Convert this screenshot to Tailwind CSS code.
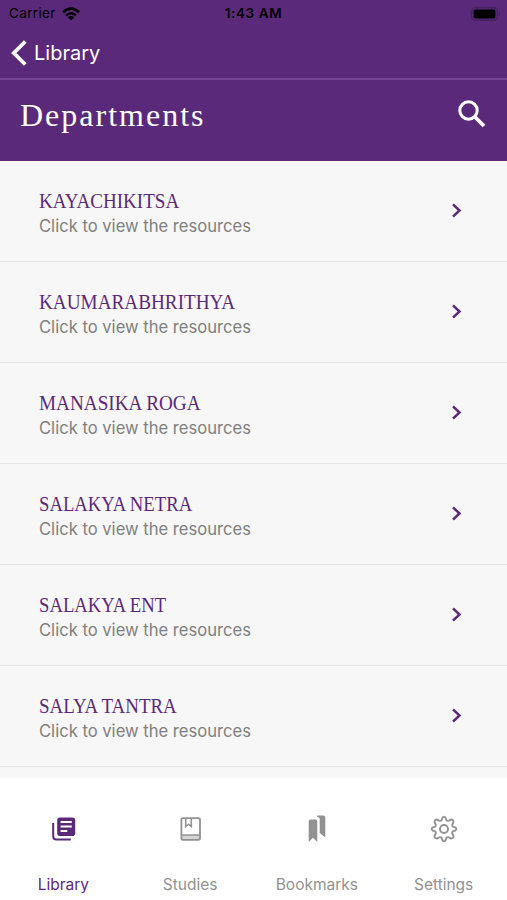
<!DOCTYPE html>
<html lang="en">
<head>
<meta charset="utf-8">
<title>Departments</title>
<script src="https://cdn.jsdelivr.net/npm/@tailwindcss/browser@4"></script>
</head>
<body class="w-[507px] h-[900px] overflow-hidden bg-[#f7f7f7] font-['Inter',sans-serif] flex flex-col">
<header class="h-[161px] shrink-0 bg-[#5b2979] text-white flex flex-col">
  <div class="h-[27px] grid grid-cols-3 items-center text-black text-[13.5px] leading-[27px]">
    <div class="flex items-center pl-[9px] gap-[6px]"><span class="tracking-[0.35px]">Carrier</span>
      <svg class="w-[18px] h-[14px]" viewBox="0 0 18 14" fill="none" stroke="currentColor" stroke-width="2.5"><path d="M1 5.2Q9-2 17 5.2M4 8.4Q9 4 14 8.4"/><path d="M5.8 10.2Q9 7.7 12.2 10.2L9 13.5Z" fill="currentColor" stroke="none"/></svg>
    </div>
    <div class="text-center font-semibold tracking-[0.6px]">1:43 AM</div>
    <div class="flex justify-end items-center pr-[6px]"><svg class="w-[31px] h-[14px]" viewBox="0 0 31 14"><rect x="1.5" y=".8" width="26" height="12.4" rx="4" fill="none" stroke="#45215d" stroke-width="1.4"/><rect x="3.5" y="2.6" width="22" height="9" rx="1.8" fill="#000"/><path d="M29 5q2 2 0 4z" fill="#45215d"/></svg></div>
  </div>
  <div class="h-[53px] flex items-center pl-[11px] gap-[7px] border-b-2 border-[#734491]">
    <svg class="w-[16px] h-[26px]" viewBox="0 0 16 26" fill="none" stroke="currentColor" stroke-width="3.8"><path d="M14.3 1.5L2.8 13L14.3 24.5"/></svg>
    <span class="text-[20px] leading-[26px]">Library</span>
  </div>
  <div class="grow flex items-center justify-between pl-[20px] pr-[21px] pb-[13px]">
    <h1 class="pt-[2px] font-['Liberation_Serif',serif] text-[32px] leading-[40px] tracking-[2px]">Departments</h1>
    <svg class="w-[28px] h-[28px]" viewBox="0 0 28 28" fill="none" stroke="currentColor"><circle cx="10.5" cy="10.5" r="8.7" stroke-width="3"/><path d="M17 17L26 26" stroke-width="3.8"/></svg>
  </div>
</header>
<main class="h-[617px] shrink-0 overflow-hidden text-[#5b2979]">
  <div class="h-[101px] border-b border-[#e5e5e5] flex items-center justify-between pl-[39px] pr-[45px]">
    <div class="pt-[4px]"><h2 class="w-max origin-left scale-x-[.908] font-['Liberation_Serif',serif] text-[21px] leading-[26px]">KAYACHIKITSA</h2><p class="text-[16.6px] leading-[25px] text-[#808080]">Click to view the resources</p></div>
    <svg class="w-[11px] h-[15px] mb-[2px]" viewBox="0 0 11 15" fill="none" stroke="currentColor" stroke-width="2.5"><path d="M2 1.3L8.5 7.5L2 13.7"/></svg>
  </div>
  <div class="h-[101px] border-b border-[#e5e5e5] flex items-center justify-between pl-[39px] pr-[45px]">
    <div class="pt-[4px]"><h2 class="w-max origin-left scale-x-[.914] font-['Liberation_Serif',serif] text-[21px] leading-[26px]">KAUMARABHRITHYA</h2><p class="text-[16.6px] leading-[25px] text-[#808080]">Click to view the resources</p></div>
    <svg class="w-[11px] h-[15px] mb-[2px]" viewBox="0 0 11 15" fill="none" stroke="currentColor" stroke-width="2.5"><path d="M2 1.3L8.5 7.5L2 13.7"/></svg>
  </div>
  <div class="h-[101px] border-b border-[#e5e5e5] flex items-center justify-between pl-[39px] pr-[45px]">
    <div class="pt-[4px]"><h2 class="w-max origin-left scale-x-[.914] font-['Liberation_Serif',serif] text-[21px] leading-[26px]">MANASIKA ROGA</h2><p class="text-[16.6px] leading-[25px] text-[#808080]">Click to view the resources</p></div>
    <svg class="w-[11px] h-[15px] mb-[2px]" viewBox="0 0 11 15" fill="none" stroke="currentColor" stroke-width="2.5"><path d="M2 1.3L8.5 7.5L2 13.7"/></svg>
  </div>
  <div class="h-[101px] border-b border-[#e5e5e5] flex items-center justify-between pl-[39px] pr-[45px]">
    <div class="pt-[4px]"><h2 class="w-max origin-left scale-x-[.89] font-['Liberation_Serif',serif] text-[21px] leading-[26px]">SALAKYA NETRA</h2><p class="text-[16.6px] leading-[25px] text-[#808080]">Click to view the resources</p></div>
    <svg class="w-[11px] h-[15px] mb-[2px]" viewBox="0 0 11 15" fill="none" stroke="currentColor" stroke-width="2.5"><path d="M2 1.3L8.5 7.5L2 13.7"/></svg>
  </div>
  <div class="h-[101px] border-b border-[#e5e5e5] flex items-center justify-between pl-[39px] pr-[45px]">
    <div class="pt-[4px]"><h2 class="w-max origin-left scale-x-[.89] font-['Liberation_Serif',serif] text-[21px] leading-[26px]">SALAKYA ENT</h2><p class="text-[16.6px] leading-[25px] text-[#808080]">Click to view the resources</p></div>
    <svg class="w-[11px] h-[15px] mb-[2px]" viewBox="0 0 11 15" fill="none" stroke="currentColor" stroke-width="2.5"><path d="M2 1.3L8.5 7.5L2 13.7"/></svg>
  </div>
  <div class="h-[101px] border-b border-[#e5e5e5] flex items-center justify-between pl-[39px] pr-[45px]">
    <div class="pt-[4px]"><h2 class="w-max origin-left scale-x-[.902] font-['Liberation_Serif',serif] text-[21px] leading-[26px]">SALYA TANTRA</h2><p class="text-[16.6px] leading-[25px] text-[#808080]">Click to view the resources</p></div>
    <svg class="w-[11px] h-[15px] mb-[2px]" viewBox="0 0 11 15" fill="none" stroke="currentColor" stroke-width="2.5"><path d="M2 1.3L8.5 7.5L2 13.7"/></svg>
  </div>
</main>
<nav class="grow bg-white grid grid-cols-4 text-[#929292] text-[15.5px] leading-[20px]">
  <a class="flex flex-col items-center pt-[37px] gap-[32px] text-[#5b2979]">
    <svg class="w-[28px] h-[28px]" viewBox="-.8 0 28 28"><path d="M3.4 8V21.5Q3.4 24.6 6.5 24.6H21" fill="none" stroke="currentColor" stroke-width="2"/><rect x="7.4" y="2.5" width="18" height="18.5" rx="2.8" fill="currentColor"/><path d="M10.8 7H22M10.8 11.5H22M10.8 16H17.5" stroke="#fff" stroke-width="1.9"/></svg>
    <span>Library</span></a>
  <a class="flex flex-col items-center pt-[37px] gap-[32px]">
    <svg class="w-[28px] h-[28px]" viewBox="-.5 0 28 28" fill="none" stroke="currentColor" stroke-width="1.8"><path d="M5 20.2H23V24H5Z" fill="#d4d4d4" stroke="none"/><rect x="4.9" y="3.2" width="18.6" height="21.6" rx="1.6"/><path d="M5 20H23.5" stroke-width="1.5"/><path d="M9.2 3.5V11.6L12 9.2L14.8 11.6V3.5" stroke-width="1.6"/></svg>
    <span>Studies</span></a>
  <a class="flex flex-col items-center pt-[37px] gap-[32px]">
    <svg class="w-[28px] h-[28px]" viewBox="-.3 .5 28 28" fill="currentColor"><path d="M5.4 6.8Q5.4 5 7.2 5H12.2Q14 5 14 6.8V27.5L9.7 23.2L5.4 27.5Z"/><path d="M13.8 1H20Q22 1 22 3V23L16.4 18.5V4.5Q16.4 2.8 13.8 2.6Z"/></svg>
    <span>Bookmarks</span></a>
  <a class="flex flex-col items-center pt-[37px] gap-[32px]">
    <svg class="w-[28px] h-[28px]" viewBox="0 0 28 28" fill="none" stroke="currentColor" stroke-width="1.9" stroke-linejoin="round"><path d="M12.3 3Q14 .2 15.7 3L16.3 5.1Q17.3 6.2 18.7 5.7L20.6 4.6Q23.8 4.2 23.4 7.4L22.3 9.3Q21.8 10.7 22.9 11.7L25 12.3Q27.8 14 25 15.7L22.9 16.3Q21.8 17.3 22.3 18.7L23.4 20.6Q23.8 23.8 20.6 23.4L18.7 22.3Q17.3 21.8 16.3 22.9L15.7 25Q14 27.8 12.3 25L11.7 22.9Q10.7 21.8 9.3 22.3L7.4 23.4Q4.2 23.8 4.6 20.6L5.7 18.7Q6.2 17.3 5.1 16.3L3 15.7Q.2 14 3 12.3L5.1 11.7Q6.2 10.7 5.7 9.3L4.6 7.4Q4.2 4.2 7.4 4.6L9.3 5.7Q10.7 6.2 11.7 5.1Z"/><circle cx="14" cy="14" r="4"/></svg>
    <span>Settings</span></a>
</nav>
</body>
</html>
